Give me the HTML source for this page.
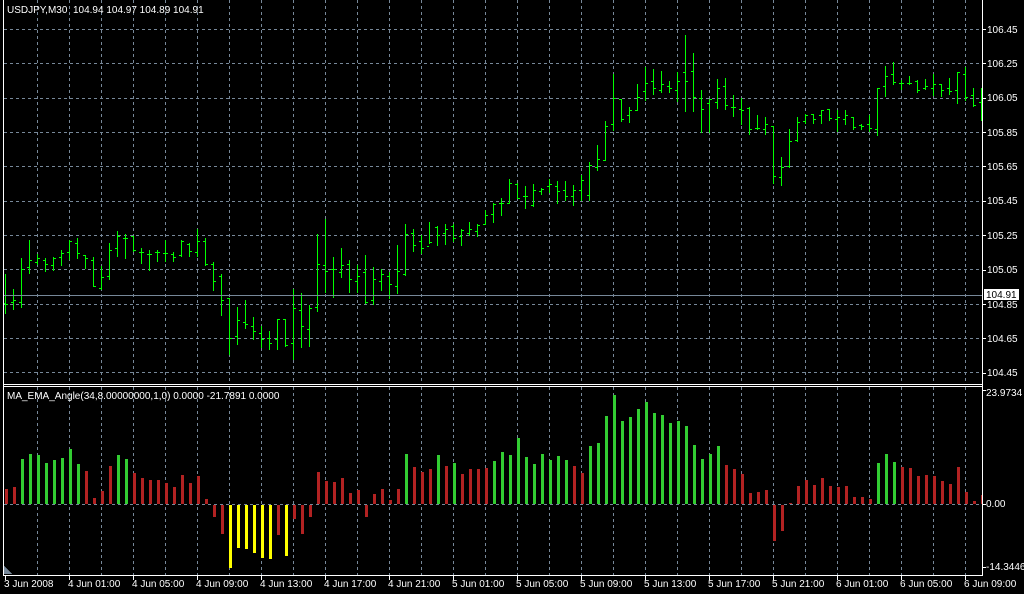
<!DOCTYPE html>
<html><head><meta charset="utf-8">
<style>
html,body{margin:0;padding:0;background:#000;}
body{width:1024px;height:594px;overflow:hidden;position:relative;font-family:"Liberation Sans",sans-serif;}
svg{position:absolute;left:0;top:0;}
svg text{font-family:"Liberation Sans",sans-serif;font-size:10px;fill:#fff;}
</style></head>
<body>
<svg id="s" width="1024" height="594" viewBox="0 0 1024 594" xmlns="http://www.w3.org/2000/svg" shape-rendering="crispEdges">
<rect width="1024" height="594" fill="#000"/>
<g id="grid" stroke="#778899" stroke-width="1" stroke-dasharray="3,3"></g>
<g id="candles" fill="#00ff00"></g>
<g id="bars"></g>
<line x1="4" y1="295.5" x2="982" y2="295.5" stroke="#778899"/>
<g stroke="#fff" stroke-width="1">
<line x1="3.5" y1="0" x2="3.5" y2="575"/>
<line x1="982.5" y1="0" x2="982.5" y2="576"/>
<line x1="3" y1="384.5" x2="983" y2="384.5"/>
<line x1="3" y1="386.5" x2="983" y2="386.5"/>
<line x1="3" y1="575.5" x2="983" y2="575.5"/>
</g>
<g id="ticks" stroke="#fff"></g>
<path d="M4 566 L4 574 L12 574 Z" fill="#778899"/>
<text x="7" y="13">USDJPY,M30&#160;&#160;104.94 104.97 104.89 104.91</text>
<text x="7" y="399">MA_EMA_Angle(34,8.00000000,1,0) 0.0000 -21.7891 0.0000</text>
<g>
<text x="987" y="33">106.45</text>
<text x="987" y="67">106.25</text>
<text x="987" y="101">106.05</text>
<text x="987" y="136">105.85</text>
<text x="987" y="170">105.65</text>
<text x="987" y="204">105.45</text>
<text x="987" y="239">105.25</text>
<text x="987" y="273">105.05</text>
<text x="987" y="308">104.85</text>
<text x="987" y="342">104.65</text>
<text x="987" y="376">104.45</text>
<rect x="984" y="289" width="35" height="11" fill="#fff"/>
<text x="986" y="298" style="fill:#000">104.91</text>
<text x="986" y="396">23.9734</text>
<text x="986" y="507">0.00</text>
<text x="986" y="570">-14.3446</text>
</g>
<g id="times"></g>
</svg>
<script>
var NS="http://www.w3.org/2000/svg";
function el(p,t,a,txt){var e=document.createElementNS(NS,t);for(var k in a)e.setAttribute(k,a[k]);if(txt!=null)e.textContent=txt;p.appendChild(e);return e;}
var g=document.getElementById('grid');
for(var x=37;x<982;x+=32){el(g,'line',{x1:x+.5,y1:0,x2:x+.5,y2:384});el(g,'line',{x1:x+.5,y1:387,x2:x+.5,y2:575});}
for(var k=0;k<11;k++){var y=Math.round(29+k*34.33)+.5;el(g,'line',{x1:4,y1:y,x2:982,y2:y});}
el(g,'line',{x1:4,y1:504.5,x2:982,y2:504.5});
var tk=document.getElementById('ticks');
[29,63,98,132,166,201,235,270,304,338,373,390,504,567].forEach(function(y){el(tk,'line',{x1:982,y1:y+.5,x2:986,y2:y+.5});});
var tm=document.getElementById('times');
var labels=["3 Jun 2008","4 Jun 01:00","4 Jun 05:00","4 Jun 09:00","4 Jun 13:00","4 Jun 17:00","4 Jun 21:00","5 Jun 01:00","5 Jun 05:00","5 Jun 09:00","5 Jun 13:00","5 Jun 17:00","5 Jun 21:00","6 Jun 01:00","6 Jun 05:00","6 Jun 09:00"];
labels.forEach(function(l,i){var x=5+64*i;el(tk,'line',{x1:x+.5,y1:575,x2:x+.5,y2:580});el(tm,'text',{x:x-1,y:587},l);});
var C=[[274,313,303,304],[289,309,302,300],[258,307,302,269],[240,273,267,260],[254,264,262,258],[258,271,260,264],[257,270,265,258],[250,265,257,253],[240,259,252,241],[238,258,243,253],[255,268,255,258],[257,286,260,286],[266,289,288,277],[243,279,276,250],[231,256,248,236],[234,258,238,238],[236,251,236,250],[248,263,252,252],[250,270,254,254],[250,261,252,252],[240,261,253,253],[252,261,254,257],[240,256,255,241],[243,256,244,251],[229,256,252,241],[238,265,241,264],[262,290,264,281],[274,315,276,300],[298,354,298,338],[307,344,336,320],[300,328,322,324],[317,339,326,331],[326,347,333,339],[331,349,338,343],[319,349,339,319],[319,346,319,345],[289,359,343,308],[293,347,310,326],[305,346,329,308],[234,311,307,264],
[219,292,265,271],[257,297,269,269],[248,277,272,265],[260,292,264,279],[265,292,281,276],[255,303,272,302],[267,304,300,279],[269,290,281,274],[272,298,276,284],[245,293,286,271],[224,275,274,234],[229,251,233,245],[235,253,241,248],[222,243,246,242],[226,245,227,235],[224,244,233,229],[224,241,226,238],[229,245,236,230],[222,235,233,229],[224,236,231,225],[210,224,224,215],[203,222,214,204],[198,215,203,203],[179,203,203,183],[183,198,184,198],[186,208,196,196],[184,206,205,190],[188,194,191,189],[179,192,186,184],[181,203,186,191],[181,200,190,196],[185,205,196,190],[175,200,190,180],[162,200,195,165],[145,170,167,159],[121,160,160,126],[74,130,124,98],[99,121,99,119],[107,122,115,110],[84,110,110,97],
[67,100,91,83],[69,94,81,88],[71,92,90,84],[81,92,86,88],[72,101,90,81],[35,111,72,81],[53,111,71,97],[90,132,98,109],[99,132,103,99],[79,108,102,88],[78,109,86,105],[95,116,107,107],[98,124,109,110],[107,134,108,129],[115,129,128,128],[117,134,129,124],[126,183,126,176],[157,185,177,167],[129,167,166,141],[117,141,140,122],[114,123,121,115],[114,123,114,119],[110,123,115,110],[109,120,109,118],[110,131,119,117],[110,124,119,115],[117,129,117,127],[124,129,125,126],[115,131,124,128],[88,135,129,88],[66,96,86,76],[62,84,74,82],[80,89,83,83],[76,84,83,83],[80,92,81,90],[79,89,88,86],[74,95,88,84],[84,96,84,90],[78,94,88,91],[72,103,90,72],[67,100,74,97],[88,106,95,105],[88,120,102,110]];
var cg=document.getElementById('candles');
C.forEach(function(c,i){var x=5+8*i;el(cg,'rect',{x:x,y:c[0],width:1,height:c[1]-c[0]+1});el(cg,'rect',{x:x-2,y:c[2],width:2,height:1});if(x+3<982)el(cg,'rect',{x:x+1,y:c[3],width:2,height:1});});
var B=[15,17,45,50,49,41,44,46,55,40,33,6,13,38,49,45,31,26,24,24,21,17,29,21,28,5,-12,-29,-63,-43,-44,-48,-53,-54,-30,-51,-14,-29,-12,32,23,22,26,11,14,-12,10,15,4,15,50,37,32,35,49,38,41,30,35,35,36,43,52,49,66,47,40,50,44,48,44,38,31,58,61,88,109,83,87,95,102,91,89,81,83,78,59,45,50,58,39,35,30,11,12,14,-36,-26,1,18,24,19,26,18,17,18,7,7,5,41,50,42,37,36,28,29,28,23,20,37,12,3,9];
var G=[2,3,4,5,6,7,8,9,14,15,50,54,56,61,62,63,64,65,66,67,68,69,70,73,74,75,76,77,78,79,80,81,82,83,84,85,86,87,88,89,109,110,111];
var Y=[28,29,30,31,32,33,35];
var bg=document.getElementById('bars');
B.forEach(function(h,i){var x=5+8*i;var col=G.indexOf(i)>=0?'#32cd32':(Y.indexOf(i)>=0?'#ffff00':'#b22222');var w=Math.min(3,982-x);if(w<=0)return;
if(h>=0)el(bg,'rect',{x:x,y:504-h,width:w,height:h,fill:col});else el(bg,'rect',{x:x,y:505,width:w,height:-h,fill:col});});
</script>
</body></html>
